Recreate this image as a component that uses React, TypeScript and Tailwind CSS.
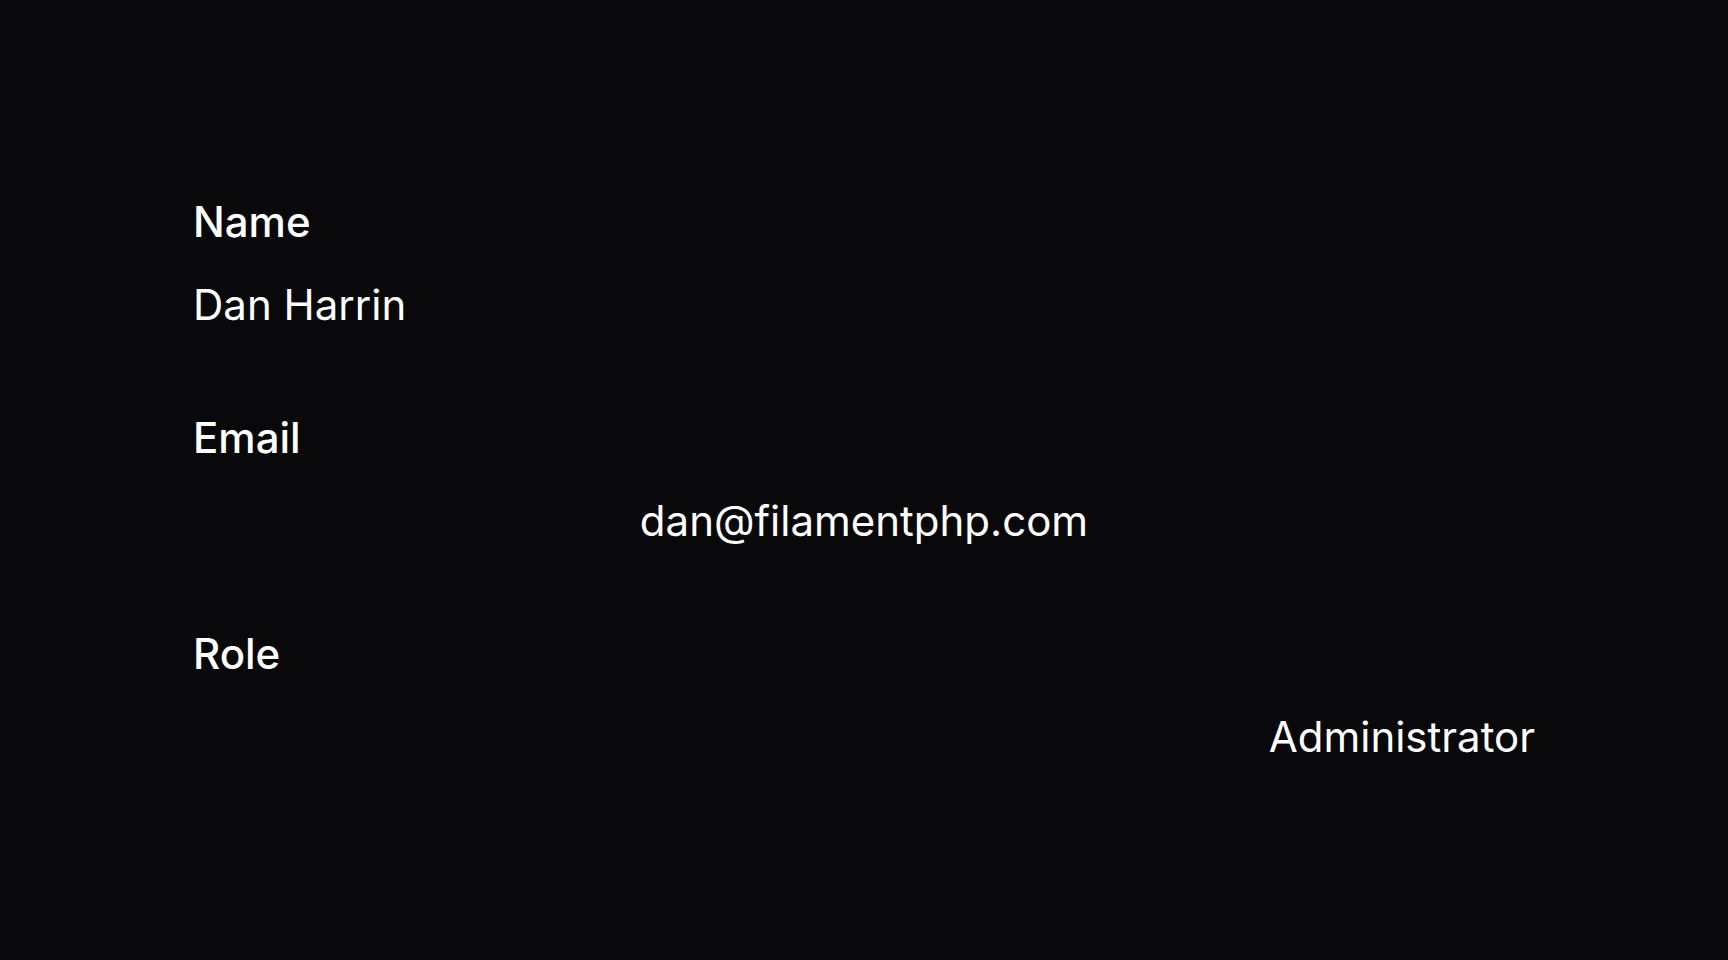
const entries = [
  { label: "Name", value: "Dan Harrin", align: "text-left" },
  { label: "Email", value: "dan@filamentphp.com", align: "text-center" },
  { label: "Role", value: "Administrator", align: "text-right" },
];

const App = () => {
  return (
    <div className="min-h-screen bg-[#09090b] px-[193px] pt-[190px] font-['Inter',sans-serif] text-white">
      <dl className="flex flex-col gap-[70px]">
        {entries.map((entry) => (
          <div key={entry.label} className="flex flex-col gap-[20px]">
            <dt className="text-[42px] leading-[63px] font-medium">{entry.label}</dt>
            <dd className={`text-[42px] leading-[63px] ${entry.align}`}>{entry.value}</dd>
          </div>
        ))}
      </dl>
    </div>
  );
};

export default App;
